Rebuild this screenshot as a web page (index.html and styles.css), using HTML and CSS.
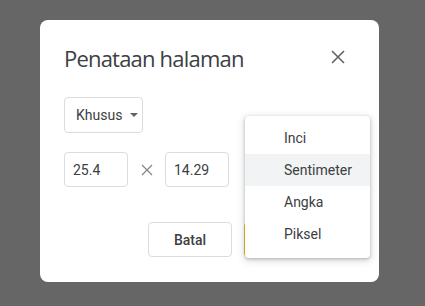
FILE: index.html
```html
<!DOCTYPE html>
<html lang="id">
<head>
<meta charset="utf-8">
<link rel="stylesheet" href="styles.css">
</head>
<body>
<div class="dialog">
  <div class="header">
    <div class="title">Penataan halaman</div>
    <svg class="close" width="14" height="14" viewBox="0 0 14 14"><path d="M1 1L13 13M13 1L1 13" stroke="#5f6368" stroke-width="1.6" fill="none"/></svg>
  </div>
  <div class="select"><span>Khusus</span><span class="caret"></span></div>
  <div class="size-row">
    <div class="field">25.4</div>
    <svg class="times" width="12" height="12" viewBox="0 0 12 12"><path d="M1 1L11 11M11 1L1 11" stroke="#80868b" stroke-width="1.2" fill="none"/></svg>
    <div class="field">14.29</div>
  </div>
  <div class="actions">
    <div class="btn">Batal</div>
    <div class="btn primary"></div>
  </div>
  <div class="menu">
    <div class="item">Inci</div>
    <div class="item active">Sentimeter</div>
    <div class="item">Angka</div>
    <div class="item">Piksel</div>
  </div>
</div>
</body>
</html>
```
FILE: styles.css
```css
html, body {
  margin: 0;
  padding: 0;
  background: #666666;
  font-family: Roboto, "Liberation Sans", sans-serif;
  color: #3c4043;
}
.dialog {
  position: relative;
  box-sizing: border-box;
  margin: 20px 0 0 40px;
  width: 339px;
  height: 262px;
  background: #fff;
  border-radius: 8px;
  padding: 22px 24px 25px 24px;
}
.header {
  display: flex;
  justify-content: space-between;
  align-items: center;
  height: 32px;
}
.title {
  font-size: 22px;
  line-height: 32px;
  color: #3c4043;
  font-family: "Open Sans", Roboto, sans-serif;
  letter-spacing: -0.8px;
}
.close {
  margin-right: 10px;
  margin-top: -2px;
}
.select {
  margin-top: 23px;
  box-sizing: border-box;
  width: 79px;
  height: 36px;
  border: 1px solid #dadce0;
  border-radius: 4px;
  display: flex;
  align-items: center;
  padding-left: 11px;
  font-size: 14px;
}
.caret {
  margin-left: 8px;
  width: 0;
  height: 0;
  border-left: 4px solid transparent;
  border-right: 4px solid transparent;
  border-top: 4px solid #5f6368;
}
.size-row {
  margin-top: 19px;
  display: flex;
  align-items: center;
}
.field {
  box-sizing: border-box;
  width: 64px;
  height: 35px;
  border: 1px solid #dadce0;
  border-radius: 4px;
  padding-left: 8px;
  display: flex;
  align-items: center;
  font-size: 14px;
}
.times {
  margin: 0 12px 0 13px;
}
.actions {
  margin-top: 35px;
  display: flex;
  justify-content: flex-end;
  gap: 12px;
}
.btn {
  box-sizing: border-box;
  width: 84px;
  height: 35px;
  border: 1px solid #dadce0;
  border-radius: 4px;
  display: flex;
  align-items: center;
  justify-content: center;
  font-size: 14px;
  font-weight: 500;
}
.btn.primary {
  width: 111px;
  background: #fbbc04;
  border-color: #fbbc04;
}
.menu {
  position: absolute;
  left: 205px;
  top: 96px;
  width: 125px;
  box-sizing: border-box;
  padding: 6px 0 8px 0;
  background: #fff;
  border-radius: 4px;
  box-shadow: 0 1px 3px rgba(60,64,67,0.3), 0 2px 6px 2px rgba(60,64,67,0.15);
}
.item {
  height: 32px;
  line-height: 32px;
  padding-left: 39px;
  font-size: 14px;
  color: #3c4043;
}
.item.active {
  background: #f1f3f4;
}
```
